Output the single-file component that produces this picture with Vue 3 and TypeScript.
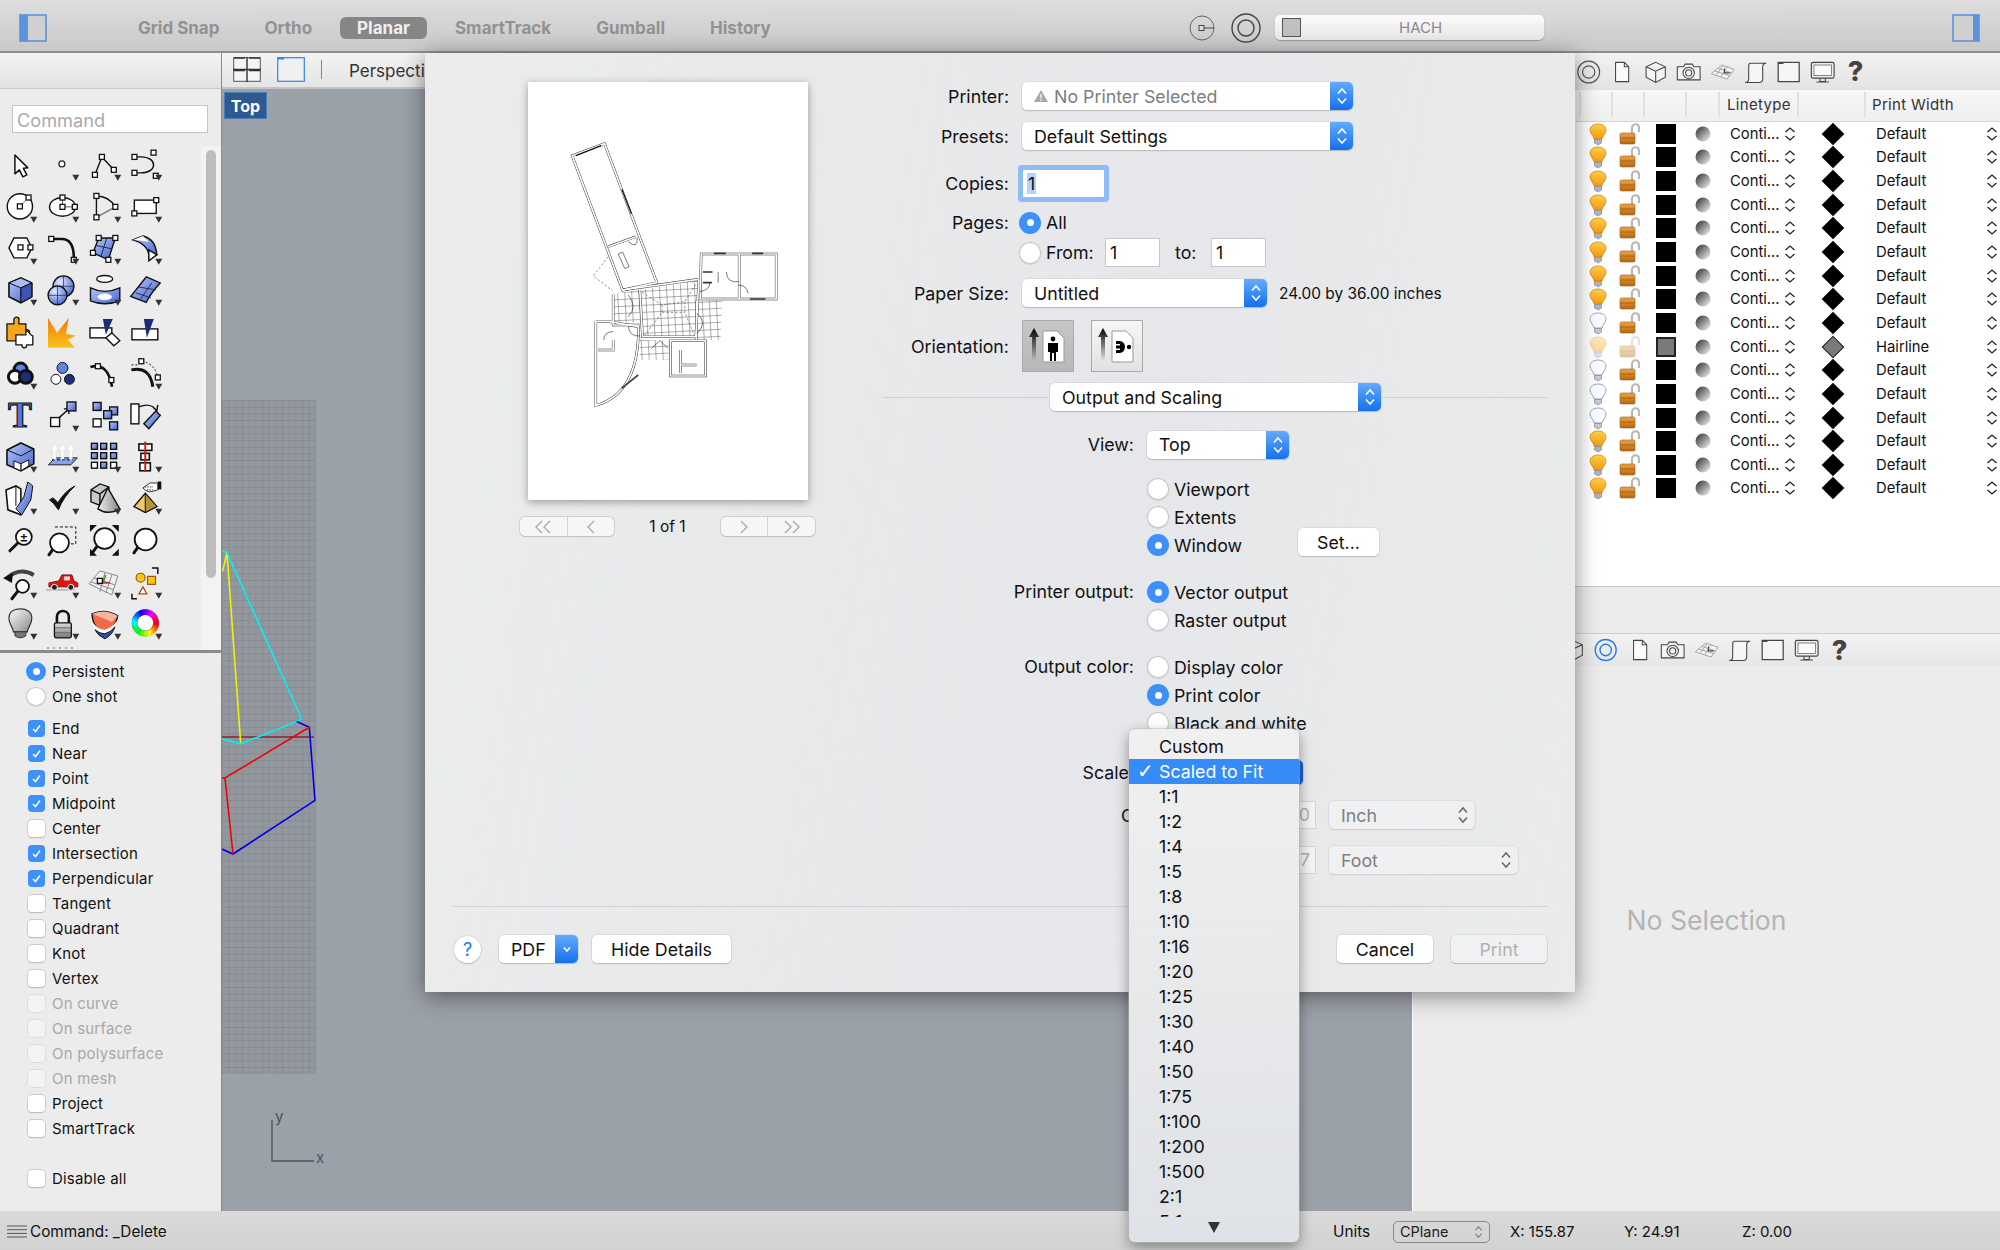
<script setup lang="ts">
const sq = (x: number, y: number, s = 5) =>
  `<rect x="${x - s / 2}" y="${y - s / 2}" width="${s}" height="${s}" fill="#fff" stroke="#111" stroke-width="1.3"/>`;
const bsq = (x: number, y: number, s = 8, f = 'url(#blueFill)') =>
  `<rect x="${x - s / 2}" y="${y - s / 2}" width="${s}" height="${s}" fill="${f}" stroke="#111" stroke-width="1.4"/>`;
const line = 'fill="none" stroke="#111" stroke-width="1.4"';
const thick = 'fill="none" stroke="#111" stroke-width="2.6"';
const lens = (x: number, y: number, r: number, hx: number, hy: number) =>
  `<path d="M${x - r * 0.7} ${y + r * 0.7}L${hx} ${hy}" stroke="#111" stroke-width="3" stroke-linecap="round"/><circle cx="${x}" cy="${y}" r="${r}" fill="#fff" stroke="#111" stroke-width="1.8"/>`;
const upArrow = (x: number) =>
  `<path d="M${x - 1.5} 24V14H${x - 4}L${x} 8 ${x + 4} 14H${x + 1.5}V24Z" fill="#fff" stroke="#ddd" stroke-width=".6"/>`;

function colorWheel() {
  let out = '';
  const n = 30;
  for (let i = 0; i < n; i++) {
    const a = (i / n) * Math.PI * 2;
    const b = ((i + 1.2) / n) * Math.PI * 2;
    const p = (r: number, t: number) => `${(20.4 + r * Math.cos(t)).toFixed(2)} ${(20 + r * Math.sin(t)).toFixed(2)}`;
    out += `<path d="M${p(11, a)}L${p(11, b)}" stroke="hsl(${Math.round((i / n) * 360)},100%,50%)" stroke-width="5.5" fill="none"/>`;
  }
  return `<circle cx="20.4" cy="20" r="13.5" fill="#111"/>${out}<circle cx="20.4" cy="20" r="8" fill="#fff"/>`;
}

const tools: [string, boolean][] = [
  // row 1
  [`<path d="M15 11V30L19.5 26 23 33 27 31 23.5 24.5 28 24Z" fill="#fff" stroke="#111" stroke-width="1.5" stroke-linejoin="round"/>`, false],
  [`<circle cx="20" cy="20" r="3" fill="#fff" stroke="#222" stroke-width="1.2"/>`, true],
  [`<path d="M11 31 18 13 30 26" ${line}/>${sq(18, 13)}${sq(11, 31)}${sq(30, 26)}`, true],
  [`<path d="M9.5 13H16C33 13 33 29 16 29H9.5" ${line}/>${sq(9.5, 13)}${sq(28.7, 8.7)}${sq(9.5, 29)}${sq(31, 32)}`, true],
  // row 2
  [`<circle cx="20" cy="20.5" r="12.7" fill="#fff" ${line}/><path d="M20 20.5 28.7 11.6" stroke="#777"/>${sq(20, 20.5)}${sq(28.7, 11.6)}`, true],
  [`<ellipse cx="20.6" cy="21" rx="13" ry="9.5" fill="#fff" ${line}/><path d="M20.6 21H33M20.6 21V11.6" stroke="#555"/>${sq(20.6, 11.6)}${sq(20.6, 21)}${sq(33, 21)}`, true],
  [`<path d="M12.5 10V31.5" ${line}/><path d="M12.5 31.5 31.5 21" stroke="#777" stroke-width="1.4"/><path d="M12.5 10Q25 10 31.5 21" ${line}/>${sq(12.5, 10)}${sq(12.5, 31.5)}${sq(31.5, 21)}`, true],
  [`<rect x="9.4" y="14.2" width="22" height="13.4" fill="#fff" ${line}/>${sq(31.4, 14.2)}${sq(9.4, 27.6)}`, true],
  // row 3
  [`<path d="M9 20 14 10H27L32 20 27 30H14Z" fill="#fff" ${line}/>${sq(20.6, 19.5)}${sq(30.6, 19.5)}`, true],
  [`<path d="M9 11H20Q32 11 32 30" ${thick}/>${sq(9.3, 11)}${sq(32, 32)}`, true],
  [`<path d="M14.8 10 31.5 10 24.5 32 9 25Z" fill="url(#blueFill)" ${line}/><path d="M12 17.5 28 21M23 10 17 28.5" stroke="#224" stroke-width="1"/>${sq(14.8, 10)}${sq(31.5, 10)}${sq(9, 25)}${sq(24.5, 32)}`, true],
  [`<path d="M8 12 18 8 Q31 11 32 27 L24 31 Q25 17 8 12Z" fill="url(#blueFill)" ${line}/><path d="M8 12 18 8 24 14Q16 12 8 12Z" fill="#fff"/><path d="M24 22 32 27 24 33Z" fill="#fff" ${line}/>`, true],
  // row 4
  [`<path d="M9 14 21 9 32 14V28L21 34 9 28Z" fill="url(#blueFill)" stroke="#111" stroke-width="1.6"/><path d="M9 14 21 19 32 14 21 9Z" fill="#a9bdf4" stroke="#111"/><path d="M21 19V34" stroke="#111"/><path d="M21 19 32 14V28L21 34Z" fill="#3a55b5" stroke="#111"/>`, true],
  [`<circle cx="21.6" cy="17.4" r="10.5" fill="url(#ballFill)" ${line}/><path d="M11 17.4H32M21.6 7V28" stroke="#224" stroke-width=".7"/><circle cx="15.6" cy="26.5" r="9.5" fill="url(#ballFill)" ${line}/><path d="M6 26.5H25M15.6 17V36" stroke="#224" stroke-width=".7"/>`, true],
  [`<ellipse cx="20.8" cy="10" rx="8" ry="3.5" fill="#fff" ${line}/><path d="M6.5 19Q21 26 36 19V32Q21 38 6.5 32Z" fill="url(#blueFill)" ${line}/><ellipse cx="20.8" cy="28" rx="7" ry="3" fill="#fff" stroke="#dfe7ff" stroke-width="1"/>`, true],
  [`<path d="M5.8 27.5 21.4 8 35.4 14Q26 24 21.4 33.5Z" fill="url(#blueFill)" ${line}/><path d="M13 18 31 21 M15 31 27 14M11 24 26 29" stroke="#224" stroke-width=".9"/>`, true],
  // row 5
  [`<path d="M7 13H14V8C16 5 20 6 19 10V13H26V19C31 18 31 24 26 24V30H7Z" fill="#f5a61d" stroke="#111" stroke-width="1.3"/><path d="M16 24H26V20C30 20 30 25 33 25V34H27C27 38 22 38 22 34H16Z" fill="#fff" stroke="#111" stroke-width="1.3"/>`, false],
  [`<path d="M6 7 15 22 27 7 24 23 34 25 26 29 33 37H6Z" fill="url(#orangeFill)"/>`, false],
  [`<rect x="6" y="17" width="22" height="10" fill="#fff" ${line}/><path d="M19 8H29L22 24Z" fill="#1b2c7a"/><path d="M22 27 28 22 36 30 30 35Z" fill="#fff" ${line}/>`, false],
  [`<rect x="7" y="18" width="26" height="11" fill="#fff" ${line}/><path d="M19 8H29L22 27Z" fill="#1b2c7a"/>`, false],
  // row 6
  [`<circle cx="20.7" cy="16.6" r="6.5" fill="#5f83e8" stroke="#111" stroke-width="3"/><circle cx="15" cy="24" r="6.5" fill="#fff" stroke="#111" stroke-width="3"/><circle cx="26" cy="24" r="6.5" fill="#1c2f78" stroke="#111" stroke-width="3"/>`, true],
  [`<circle cx="20.6" cy="15" r="5.5" fill="#5f83e8" stroke="#111"/><circle cx="14" cy="26.5" r="5" fill="#fff" stroke="#111"/><circle cx="27.6" cy="26.5" r="5" fill="#1c2f78" stroke="#111"/>`, false],
  [`<path d="M6.5 14Q24 9 28.2 34" ${thick}/>${sq(14, 13.3)}${sq(27.5, 27.2)}`, false],
  [`<path d="M6.4 17Q25 13 28 34" fill="none" stroke="#111" stroke-width="3"/><path d="M6.5 12H14M17 8Q30 11 33 24" fill="none" stroke="#111" stroke-dasharray="2 2"/>${sq(16.4, 8.3)}${sq(33, 24.6)}`, true],
  // row 7
  [`<text x="20" y="32" text-anchor="middle" font-family="Liberation Serif, serif" font-weight="700" font-size="36" fill="#4f7bea" stroke="#111" stroke-width="1.2">T</text>`, false],
  [`<path d="M17 23 27 14M22 14H27V19" ${line}/>${bsq(13.2, 27.2, 9, '#fff')}${bsq(29.6, 11.5, 9)}`, true],
  [`${bsq(13.2, 11.5)}${bsq(29.8, 16)}${bsq(23.8, 19.8)}${bsq(13.2, 28, 8, '#fff')}${bsq(29.8, 31)}`, false],
  [`<rect x="6" y="9" width="8" height="20" fill="#fff" ${line}/><path d="M19 29 31 16 35.5 20.5 24 34Z" fill="url(#blueFill)" ${line}/><path d="M14 12Q26 7 32 16M28 12 32 16 33 10" ${line}/>`, false],
  // row 8
  [`<path d="M7 14 21 7 34 13V28L21 35 7 29Z" fill="url(#blueFill)" stroke="#111" stroke-width="1.6"/><path d="M7 14 21 20 34 13" fill="none" stroke="#111"/><path d="M21 28 29 24V30L21 35Z" fill="#fff" stroke="#111"/><path d="M14 25 21 28V35L14 32Z" fill="#fff" stroke="#111"/>`, true],
  [`<path d="M13 22H35.5L29 29H6.5Z" fill="#86a2ee" stroke="#222"/>${upArrow(12.6)}${upArrow(20.6)}${upArrow(28.9)}<path d="M10 24H31" stroke="#111" stroke-dasharray="3 2"/>`, true],
  [`${bsq(10.5, 10.4, 6)}${bsq(19.8, 10.4, 6)}${bsq(29.8, 10.4, 6)}${bsq(10.5, 19.8, 6)}${bsq(19.8, 19.8, 6)}${bsq(29.8, 19.8, 6)}${bsq(10.5, 29.4, 6, '#fff')}${bsq(19.8, 29.4, 6)}${bsq(29.8, 29.4, 6, '#fff')}`, true],
  [`<rect x="14" y="8" width="13" height="6.5" fill="#fff" stroke="#111" stroke-width="1.6"/><rect x="16" y="17.5" width="8.5" height="6.5" fill="#fff" stroke="#111" stroke-width="1.6"/><rect x="15" y="27" width="10.5" height="8" fill="#fff" stroke="#111" stroke-width="1.6"/><path d="M20.4 5.6V36" stroke="#d01c1c" stroke-width="2"/>`, true],
  // row 9
  [`<path d="M6 12 16 8 21 11V37L8 32Z" fill="#fff" stroke="#111" stroke-width="1.6"/><path d="M16 8V28" stroke="#111"/><path d="M28 4 33 8 31 22 22 37 16 31 24 19Z" fill="url(#blueFill)" stroke="#111"/>`, true],
  [`<path d="M7.5 22Q11 24 16.5 32 22 18 33.2 8 23 13 16 25 13 21 11 20Z" fill="#111" stroke="#111"/>`, true],
  [`<path d="M7 12 16 6 25 9V19L15 27 7 24Z" fill="#c9c9c9" ${line}/><path d="M7 12 16 16 25 9M16 16V27" ${line}/><path d="M24 10 14 31Q24 38 36 31Z" fill="url(#coneFill)" ${line}/>`, true],
  [`<path d="M20.4 15.3 32 28.7 20.4 34.7 9 28.7Z" fill="#ecc869" stroke="#111" stroke-width="1.4"/><path d="M20.4 15.3V34.7 L32 28.7Z" fill="#b8923a" stroke="#111"/><path d="M18 10 25 5H33V12L25 14Q20 13 18 10Z" fill="#fff" stroke="#333"/><path d="M20 9H28M22 12H28" stroke="#333" stroke-dasharray="1.5 1"/><rect x="33" y="3.5" width="3.5" height="8" fill="#111"/>`, true],
  // row 10
  [`${lens(24, 17, 8, 10, 31)}<text x="24" y="22" text-anchor="middle" font-family="Inter,sans-serif" font-size="13" font-weight="600" fill="#111">±</text>`, false],
  [`<path d="M13 7H34V24H27" fill="none" stroke="#111" stroke-dasharray="3 2"/>${lens(17.6, 23, 9.5, 7, 35)}`, false],
  [`${lens(20.8, 18.6, 10.5, 9, 32)}<path d="M6 5H13L6 12ZM35 5H28L35 12ZM6 36H13L6 29ZM35 36H28L35 29Z" fill="#111"/>`, false],
  [`${lens(20.75, 19.6, 11, 9, 33)}`, false],
  // row 11
  [`${lens(22.7, 24.5, 6.5, 12, 37)}<path d="M7 16Q20 5 34 13" fill="none" stroke="#444" stroke-width="4"/><path d="M3 16 13 11 12 21Z" fill="#111"/>`, true],
  [`<path d="M4 28 33 28" stroke="#bbb" stroke-width="2"/><path d="M7 25V21L17 19 20 13H30L32 19 36 21V25Z" fill="#dc1616" stroke="#8a0c0c"/><rect x="22" y="14.5" width="6" height="4" fill="#f6d8d8"/><circle cx="12.5" cy="25.5" r="3" fill="#222" stroke="#fff"/><circle cx="29" cy="25.5" r="3" fill="#222" stroke="#fff"/>`, true],
  [`<path d="M5 22 16 9 34 14 28 33Z" fill="#f0f0f0" stroke="#888"/><path d="M10 16 31 23M7 20 30 28M21 11 16 30M28 13 22 31" stroke="#888" fill="none"/><path d="M19 21H26" stroke="#d11" stroke-width="1.5"/><path d="M19 21 22 13" stroke="#2a2" stroke-width="1.5"/>${sq(16, 19)}`, true],
  [`<circle cx="15.7" cy="15.8" r="4.5" fill="#f4c90f" stroke="#a5540e" stroke-width="1.2"/><rect x="22.7" y="14.5" width="8" height="8" fill="#f4c90f" stroke="#a5540e" stroke-width="1.2"/><path d="M18 25 22 32H14Z" fill="#fff" stroke="#a5540e" stroke-width="1.3"/><path d="M27 6H33V12M7 32V37H12" fill="none" stroke="#111" stroke-width="1.5"/>`, true],
  // row 12
  [`<path d="M13.5 29C13 24 9 22 9 15 9 8 15 6 20.7 6 27 6 32 9 32 15 32 22 28 24 27.5 29Z" fill="url(#bulbGray)" stroke="#333" stroke-width="1.2"/><path d="M15 29H26V33Q20.5 37 15 33Z" fill="#777" stroke="#333"/>`, true],
  [`<path d="M15 22V14C15 6 27 6 27 14V22" fill="none" stroke="#111" stroke-width="2.6"/><rect x="12.5" y="20" width="17" height="15" rx="1.5" fill="url(#lockGray)" stroke="#111" stroke-width="1.3"/><path d="M13 25H29M13 30H29" stroke="#666"/>`, true],
  [`<path d="M8 11Q21 5 34 13 32 25 21 30Q9 26 8 11Z" fill="#ef6a45" stroke="#111" stroke-width="1.3"/><path d="M8 11Q21 5 34 13L28 19Q16 14 8 11Z" fill="#f6b49e"/><path d="M9 20Q15 27 21 27 29 24 33 18L33 21Q29 30 21 33Q12 29 9 23Z" fill="#fff"/><path d="M11 27Q16 31 21 31 28 29 31 24 29 32 21 36Q14 33 11 27Z" fill="#2e4fb8" stroke="#111"/>`, true],
  [colorWheel(), true],
];

const osnaps = [
  { t: 'End', on: true }, { t: 'Near', on: true }, { t: 'Point', on: true }, { t: 'Midpoint', on: true },
  { t: 'Center' }, { t: 'Intersection', on: true }, { t: 'Perpendicular', on: true }, { t: 'Tangent' },
  { t: 'Quadrant' }, { t: 'Knot' }, { t: 'Vertex' }, { t: 'On curve', off: true }, { t: 'On surface', off: true },
  { t: 'On polysurface', off: true }, { t: 'On mesh', off: true }, { t: 'Project' }, { t: 'SmartTrack' },
];

const layers = Array.from({ length: 16 }, (_, i) => ({
  bulb: [8, 10, 11, 12].includes(i) ? 'bulbOff' : 'bulbOn',
  faded: i === 9,
  width: i === 9 ? 'Hairline' : 'Default',
}));

const panelIcons = ['icoDoc', 'icoCube', 'icoCam', 'icoGrid', 'icoScroll', 'icoWin', 'icoMon'];
const lowerIcons = ['icoDoc', 'icoCam', 'icoGrid', 'icoScroll', 'icoWin', 'icoMon'];
const scales = ['1:1', '1:2', '1:4', '1:5', '1:8', '1:10', '1:16', '1:20', '1:25', '1:30', '1:40', '1:50', '1:75', '1:100', '1:200', '1:500', '2:1', '5:1'];
</script>

<template>
  <div class="app">
    <svg class="defs" width="0" height="0">
      <defs>
        <linearGradient id="blueFill" x1="0" y1="0" x2="1" y2="1"><stop offset="0" stop-color="#b8c9f6" /><stop offset="1" stop-color="#3f62d0" /></linearGradient>
        <radialGradient id="ballFill" cx=".35" cy=".3" r=".8"><stop offset="0" stop-color="#e4ebff" /><stop offset="1" stop-color="#3f62d0" /></radialGradient>
        <linearGradient id="orangeFill" x1="0" y1="0" x2="0" y2="1"><stop offset="0" stop-color="#f07a08" /><stop offset="1" stop-color="#fcc21a" /></linearGradient>
        <linearGradient id="coneFill" x1="0" y1="0" x2="1" y2="0"><stop offset="0" stop-color="#eee" /><stop offset="1" stop-color="#888" /></linearGradient>
        <linearGradient id="bulbGray" x1="0" y1="0" x2="1" y2="1"><stop offset="0" stop-color="#fff" /><stop offset="1" stop-color="#888" /></linearGradient>
        <linearGradient id="lockGray" x1="0" y1="0" x2="0" y2="1"><stop offset="0" stop-color="#ddd" /><stop offset="1" stop-color="#777" /></linearGradient>
        <linearGradient id="bulbY" x1="0" y1="0" x2="0" y2="1"><stop offset="0" stop-color="#ffd24a" /><stop offset="1" stop-color="#f59a12" /></linearGradient>
        <linearGradient id="wood" x1="0" y1="0" x2="0" y2="1"><stop offset="0" stop-color="#eda548" /><stop offset="1" stop-color="#b5660f" /></linearGradient>
        <linearGradient id="sphereG" x1="0" y1="0" x2="1" y2="1"><stop offset="0" stop-color="#2a2a2a" /><stop offset=".42" stop-color="#808080" /><stop offset="1" stop-color="#fafafa" /></linearGradient>
        <linearGradient id="arrowFade" x1="0" y1="0" x2="0" y2="1"><stop offset="0" stop-color="#000" /><stop offset="1" stop-color="#000" stop-opacity="0" /></linearGradient>
        <pattern id="hatch" width="21" height="21" patternUnits="userSpaceOnUse" patternTransform="rotate(-3)"><path d="M21 0H0V21" fill="none" stroke="#444" stroke-width="2.6" /></pattern>
        <pattern id="vpGrid" x="222" y="400" width="6.67" height="6.67" patternUnits="userSpaceOnUse"><path d="M6.67 0H0V6.67" fill="none" stroke="#83888f" stroke-width="1.2" /></pattern>

        <symbol id="chev" viewBox="0 0 12 20"><path d="M2 7.5 6 3 10 7.5M2 12.5 6 17 10 12.5" fill="none" stroke="currentColor" stroke-width="1.5" /></symbol>
        <symbol id="chevW" viewBox="0 0 12 16"><path d="M1.5 6 6 2 10.5 6M1.5 10 6 14 10.5 10" fill="none" stroke="currentColor" stroke-width="1.3" /></symbol>
        <symbol id="bulbOn" viewBox="0 0 24 24"><path d="M8 17C8 14 4 12 4 8 4 4 8 2 12 2 16 2 20 4 20 8 20 12 16 14 16 17Z" fill="url(#bulbY)" stroke="#d8881a" stroke-width=".8" /><path d="M8.5 17.5H15.5V21L12 23 8.5 21Z" fill="#aeb6c4" stroke="#778" stroke-width=".6" /></symbol>
        <symbol id="bulbOff" viewBox="0 0 24 24"><path d="M8 17C8 14 4 12 4 8 4 4 8 2 12 2 16 2 20 4 20 8 20 12 16 14 16 17Z" fill="#f8fbff" stroke="#8d9cb0" stroke-width=".9" /><path d="M8.5 17.5H15.5V21L12 23 8.5 21Z" fill="#c4cad4" stroke="#778" stroke-width=".6" /></symbol>
        <symbol id="lockOpen" viewBox="0 0 24 24"><path d="M15 12V6C15 1 22 1 22 6V10" fill="none" stroke="#b8b8b8" stroke-width="2.2" /><rect x="3" y="11" width="15" height="11" rx="1.5" fill="url(#wood)" stroke="#9a5a12" stroke-width=".6" /><path d="M3 16H18" stroke="#a86010" /></symbol>

        <symbol id="icoTarget" viewBox="0 0 32 32"><circle cx="16" cy="16" r="12.5" fill="none" stroke="#555" stroke-width="1.3" /><circle cx="16" cy="16" r="7" fill="none" stroke="#555" stroke-width="1.3" /></symbol>
        <symbol id="icoTargetBlue" viewBox="0 0 32 32"><circle cx="16" cy="16" r="12" fill="none" stroke="#2d7fe8" stroke-width="1.6" /><circle cx="16" cy="16" r="6.5" fill="none" stroke="#2d7fe8" stroke-width="1.6" /></symbol>
        <symbol id="icoDoc" viewBox="0 0 32 32"><path d="M9 5H19L24 10V27H9Z" fill="#fbfbfb" stroke="#444" stroke-width="1.2" /><path d="M19 5V10H24" fill="none" stroke="#444" stroke-width="1.2" /></symbol>
        <symbol id="icoCube" viewBox="0 0 32 32"><path d="M16 5 27 10V22L16 28 5 22V10ZM5 10 16 15 27 10M16 15V28" fill="#f4f4f4" stroke="#444" stroke-width="1.2" /></symbol>
        <symbol id="icoCam" viewBox="0 0 32 32"><path d="M3 10H10L12 7H20L22 10H29V25H3Z" fill="#f4f4f4" stroke="#444" stroke-width="1.2" /><circle cx="16" cy="17" r="6.5" fill="none" stroke="#444" stroke-width="1.2" /><circle cx="16" cy="17" r="3.5" fill="none" stroke="#444" stroke-width="1.2" /></symbol>
        <symbol id="icoGrid" viewBox="0 0 32 32"><path d="M3 18 15 8 29 13 21 24Z" fill="#f4f4f4" stroke="#999" /><path d="M7 15 24 20M11 12 26 17M14 21 21 10M9 19 16 9" stroke="#999" fill="none" /><path d="M18 12V17H24" stroke="#444" stroke-width="1.3" fill="none" /></symbol>
        <symbol id="icoScroll" viewBox="0 0 32 32"><path d="M10 6H28C25 6 24 8 24 10V24C24 27 22 28 20 28H4C7 28 8 26 8 24V9C8 7 9 6 10 6Z" fill="#f6f6f6" stroke="#444" stroke-width="1.2" /></symbol>
        <symbol id="icoWin" viewBox="0 0 32 32"><rect x="4" y="5" width="24" height="22" fill="#f6f6f6" stroke="#444" stroke-width="1.4" /><path d="M4 6H10" stroke="#444" stroke-width="1.8" /></symbol>
        <symbol id="icoMon" viewBox="0 0 32 32"><rect x="3" y="5" width="26" height="18" rx="2" fill="#eee" stroke="#444" stroke-width="1.3" /><rect x="6" y="8" width="20" height="12" fill="#fafafa" stroke="#777" /><path d="M13 23V27H19V23M9 27.5H23" fill="none" stroke="#444" stroke-width="1.2" /></symbol>
      </defs>
    </svg>

    <header class="topbar">
      <svg class="panel-ico" width="28" height="28" viewBox="0 0 28 28"><rect x="1" y="1" width="26" height="26" fill="#d0d0d0" stroke="#5b93dc" stroke-width="1.6" /><rect x="1" y="1" width="8" height="26" fill="#5b93dc" /></svg>
      <nav class="modes">
        <span>Grid Snap</span><span>Ortho</span><span class="mode-on">Planar</span><span>SmartTrack</span><span>Gumball</span><span>History</span>
      </nav>
      <div class="cluster">
        <svg width="26" height="26" viewBox="0 0 26 26"><ellipse cx="13" cy="13" rx="12" ry="12" fill="none" stroke="#666" /><rect x="10" y="10.5" width="5" height="5" fill="#ddd" stroke="#444" /><path d="M15 13H25" stroke="#444" /></svg>
        <svg class="c2" width="30" height="30" viewBox="0 0 30 30"><circle cx="15" cy="15" r="14" fill="none" stroke="#444" stroke-width="1.4" /><circle cx="15" cy="15" r="8" fill="none" stroke="#444" stroke-width="1.4" /></svg>
        <div class="hach"><i class="hach-swatch"></i><span>HACH</span></div>
      </div>
      <svg class="panel-right" width="28" height="28" viewBox="0 0 28 28"><rect x="1" y="1" width="26" height="26" fill="#d0d0d0" stroke="#5b93dc" stroke-width="1.6" /><rect x="21" y="1" width="6" height="26" fill="#5b93dc" /></svg>
    </header>

    <main class="work">
      <aside class="sidebar">
        <div class="side-head"></div>
        <div class="command">Command</div>
        <div class="tool-area">
          <div class="tool-grid">
            <svg v-for="(t, i) in tools" :key="i" class="tool" viewBox="0 0 42 42">
              <g v-html="t[0]"></g>
              <polygon v-if="t[1]" points="30.5,31 37.5,31 34,37" fill="#333" />
            </svg>
            <i class="grip"></i>
          </div>
          <div class="scroll-track"><div class="scroll-thumb"></div></div>
        </div>
        <div class="osnap">
          <label class="os-row radio-row"><i class="radio on small"></i>Persistent</label>
          <label class="os-row radio-row"><i class="radio small"></i>One shot</label>
          <div class="os-list">
            <label v-for="o in osnaps" :key="o.t" class="os-row" :class="{ dim: o.off }">
              <i class="check" :class="{ on: o.on }">
                <svg v-if="o.on" width="11" height="11" viewBox="0 0 11 11"><path d="M2 6 4.5 8.5 9 2.5" fill="none" stroke="#fff" stroke-width="1.5" /></svg>
              </i>{{ o.t }}
            </label>
          </div>
          <label class="os-row disable"><i class="check"></i>Disable all</label>
        </div>
      </aside>

      <section class="viewport">
        <div class="vp-head">
          <svg width="28" height="25" viewBox="0 0 28 25"><rect x=".7" y=".7" width="26.6" height="23.6" fill="#f5f5f5" stroke="#555" /><path d="M14 0V25M0 12.5H28" stroke="#333" stroke-width="1.4" /><path d="M1 1H12M16 1H27M1 13.5H12M16 13.5H27" stroke="#333" stroke-width="1.4" /></svg>
          <svg class="vp-single" width="28" height="25" viewBox="0 0 28 25"><rect x=".7" y=".7" width="26.6" height="23.6" fill="#f0f0f0" stroke="#2f86ee" stroke-width="1.2" /><path d="M1 1.5H7" stroke="#2f86ee" stroke-width="2" /></svg>
          <i class="vp-sep"></i>
          <span class="vp-persp">Perspective</span>
        </div>
        <div class="vp-body">
          <span class="vp-tab">Top</span>
          <svg class="vp-draw" viewBox="222 53 1190 1158">
            <rect x="222" y="400" width="94" height="674" fill="#93989f" />
            <rect x="222" y="400" width="94" height="674" fill="url(#vpGrid)" />
            <path d="M222 737H314" stroke="#8d3f45" stroke-width="2" />
            <g fill="none" stroke-width="1.6">
              <path d="M222.5 571.6 227 552.7 240.7 743.8" stroke="#f5f000" />
              <path d="M222 551 227 552.7 301.7 719 296.7 721.6 240.7 743.8 222 738.8" stroke="#00f0f0" />
              <path d="M296.7 721.6 309.3 727.3 315 800.4 233 854 222 849" stroke="#0000e6" />
              <path d="M309.3 727.3 225 778 222 778M225 778 233 854" stroke="#f00000" />
            </g>
            <path d="M272 1120V1161H314" fill="none" stroke="#4d535b" stroke-width="1.3" />
            <text x="275" y="1122" class="axis">y</text>
            <text x="316" y="1163" class="axis">x</text>
          </svg>
        </div>
      </section>

      <section class="rightpanel">
        <div class="rp-tools upper">
          <svg class="rp-ico"><use href="#icoTarget" /></svg>
          <svg v-for="p in panelIcons" :key="p" class="rp-ico"><use :href="'#' + p" /></svg>
          <b class="rp-q">?</b>
        </div>
        <div class="layer-table">
          <div class="layer-head">
            <i></i><i></i><i></i><i></i><i></i>
            <span class="col-line">Linetype</span><i class="col-dia"></i><span class="col-print">Print Width</span>
          </div>
          <div v-for="(l, i) in layers" :key="i" class="layer-row" :class="{ faded: l.faded }">
            <svg class="lr-bulb" width="24" height="24"><use :href="'#' + l.bulb" /></svg>
            <svg class="lr-lock" width="24" height="24"><use href="#lockOpen" /></svg>
            <i class="lr-swatch"></i>
            <i class="lr-sphere"><svg width="16" height="16" viewBox="0 0 16 16"><circle cx="8" cy="8" r="7.5" fill="url(#sphereG)" /></svg></i>
            <span class="lr-line">Conti...</span>
            <svg class="lr-step" width="12" height="16"><use href="#chevW" /></svg>
            <i class="lr-dia"></i>
            <span class="lr-width">{{ l.width }}</span>
            <svg class="lr-step2" width="12" height="16"><use href="#chevW" /></svg>
          </div>
        </div>
        <div class="rp-gap"></div>
        <div class="rp-tools lower">
          <svg class="rp-ico"><use href="#icoCube" /></svg>
          <svg class="rp-ico"><use href="#icoTargetBlue" /></svg>
          <svg v-for="p in lowerIcons" :key="p" class="rp-ico"><use :href="'#' + p" /></svg>
          <b class="rp-q">?</b>
        </div>
        <div class="no-sel">No Selection</div>
      </section>
    </main>

    <footer class="status">
      <svg width="20" height="14" viewBox="0 0 20 14"><path d="M0 1H20M0 4.7H20M0 8.4H20M0 12H20" stroke="#555" stroke-width="1" /></svg>
      <span class="st-cmd">Command: _Delete</span>
      <span class="st-units">Units</span>
      <div class="st-sel">CPlane<svg width="9" height="16"><use href="#chev" /></svg></div>
      <span class="st-x">X: 155.87</span>
      <span class="st-y">Y: 24.91</span>
      <span class="st-z">Z: 0.00</span>
    </footer>

    <div class="dialog">
      <div class="dlg-top">
        <div class="preview">
          <div class="page">
            <svg viewBox="85 66 839 1254" width="280" height="418">
              <g fill="url(#hatch)" stroke="none">
                <path d="M335 703 415 690 420 790 340 785Z" />
                <path d="M415 690 597 660 588 830 425 830Z" />
                <path d="M590 722H667L662 840H590Z" />
                <path d="M420 840H510L508 900H420Z" />
              </g>
              <g fill="none" stroke="#333" stroke-width="1.6" stroke-dasharray="7 6">
                <path d="M325 590 280 648 338 692" />
                <path d="M415 690 487 735 555 725 590 670M487 735V757L435 825M487 757H555M555 725V757L585 830" />
              </g>
              <g class="wall">
                <path d="M217 287 314 251 471 668 368 690ZM325 560 408 530" />
                <path d="M604 582H829V717H601ZM718 582V717" />
                <path d="M512 842H617V948H512ZM542 870V938M542 915H590" />
                <path d="M288 783V1036Q418 1000 416 800L330 785H288ZM295 870H340V840" />
                <path d="M368 690 595 658M420 690 428 830H588L597 660M420 795H340V704M590 722V840" />
              </g>
              <g class="wall-in">
                <path d="M217 287 314 251 471 668 368 690ZM325 560 408 530" />
                <path d="M604 582H829V717H601ZM718 582V717" />
                <path d="M512 842H617V948H512ZM542 870V938M542 915H590" />
                <path d="M288 783V1036Q418 1000 416 800L330 785H288ZM295 870H340V840" />
                <path d="M368 690 595 658M420 690 428 830H588L597 660M420 795H340V704M590 722V840" />
              </g>
              <path d="M228 287 304 257M366 388 395 462" stroke="#111" stroke-width="3.5" fill="none" />
              <path d="M609 636H638M609 668H636M642 580H678M757 580H790M750 717H797" stroke="#333" stroke-width="5" fill="none" />
              <g fill="none" stroke="#222" stroke-width="1.8">
                <path d="M355 582 368 576 388 620 375 626Z" />
                <path d="M385 545Q415 570 412 532" />
                <path d="M680 636Q680 670 718 665M655 636V668M745 700Q740 675 715 675" />
                <path d="M385 705Q415 740 385 770M592 760Q625 790 592 820M455 865 480 842 505 865M312 840Q312 815 340 815M385 800Q390 830 420 828M600 695Q630 690 630 668" />
                <path d="M415 945 365 985" stroke-width="5" stroke="#444" />
              </g>
            </svg>
          </div>
          <div class="pager">
            <div class="seg">
              <span><svg width="18" height="14" viewBox="0 0 18 14"><path d="M8 1 2 7 8 13M16 1 10 7 16 13" fill="none" stroke="#aaa" stroke-width="1.4" /></svg></span>
              <span><svg width="10" height="14" viewBox="0 0 10 14"><path d="M8 1 2 7 8 13" fill="none" stroke="#aaa" stroke-width="1.4" /></svg></span>
            </div>
            <span class="page-no">1 of 1</span>
            <div class="seg">
              <span><svg width="10" height="14" viewBox="0 0 10 14"><path d="M2 1 8 7 2 13" fill="none" stroke="#aaa" stroke-width="1.4" /></svg></span>
              <span><svg width="18" height="14" viewBox="0 0 18 14"><path d="M2 1 8 7 2 13M10 1 16 7 10 13" fill="none" stroke="#aaa" stroke-width="1.4" /></svg></span>
            </div>
          </div>
        </div>

        <div class="form">
          <div class="row">
            <span class="lab-a">Printer:</span>
            <div class="sel w331"><span class="sel-text gray"><svg class="warn" width="16" height="14" viewBox="0 0 16 14"><path d="M8 1 15 13H1Z" fill="#a8a8a8" /><path d="M8 5V9.5M8 10.5V12" stroke="#fff" stroke-width="1.2" /></svg>No Printer Selected</span><span class="sel-arrow"><svg width="12" height="20"><use href="#chev" /></svg></span></div>
          </div>
          <div class="row mt12">
            <span class="lab-a">Presets:</span>
            <div class="sel w331"><span class="sel-text">Default Settings</span><span class="sel-arrow"><svg width="12" height="20"><use href="#chev" /></svg></span></div>
          </div>
          <div class="row mt20 h27">
            <span class="lab-a">Copies:</span>
            <div class="copies"><span class="hl">1</span></div>
          </div>
          <div class="row mt15 h21">
            <span class="lab-a">Pages:</span>
            <i class="radio on shift"></i><span class="rad-lab">All</span>
          </div>
          <div class="row mt5 h29">
            <span class="lab-a"></span>
            <i class="radio shift"></i><span class="rad-lab from">From:</span>
            <span class="field f-from">1</span><span class="to">to:</span><span class="field">1</span>
          </div>
          <div class="row mt12">
            <span class="lab-a">Paper Size:</span>
            <div class="sel w245"><span class="sel-text">Untitled</span><span class="sel-arrow"><svg width="12" height="20"><use href="#chev" /></svg></span></div>
            <span class="paper-size">24.00 by 36.00 inches</span>
          </div>
          <div class="row mt13 h52">
            <span class="lab-a">Orientation:</span>
            <div class="orient pressed">
              <svg width="50" height="50" viewBox="0 0 50 50"><path d="M11 7 6 16H9V40H13V16H16Z" fill="url(#arrowFade)" /><path d="M20 10H34L41 17V41H20Z" fill="#fff" stroke="#999" /><circle cx="30" cy="18" r="2.4" /><path d="M25 22H35V31H33V40H31V32H29V40H27V31H25Z" /></svg>
            </div>
            <div class="orient">
              <svg width="50" height="50" viewBox="0 0 50 50"><path d="M11 7 6 16H9V40H13V16H16Z" fill="url(#arrowFade)" /><path d="M20 10H34L41 17V41H20Z" fill="#fff" stroke="#999" /><circle cx="37" cy="26" r="2.2" /><path d="M24 20H28Q33 21 33 26 33 31 28 32H24V29H28V27.5H24V24.5H28V23H24Z" /></svg>
            </div>
          </div>
          <div class="row mt11 section">
            <i class="rule left"></i>
            <div class="sel w331"><span class="sel-text">Output and Scaling</span><span class="sel-arrow"><svg width="12" height="20"><use href="#chev" /></svg></span></div>
            <i class="rule"></i>
          </div>
          <div class="row mt20 h27">
            <span class="lab-b">View:</span>
            <div class="sel w142 h27"><span class="sel-text">Top</span><span class="sel-arrow"><svg width="12" height="20"><use href="#chev" /></svg></span></div>
          </div>
          <div class="group mt17">
            <span class="lab-b"></span>
            <div class="stack">
              <div class="rad-row"><i class="radio"></i><span class="rad-lab">Viewport</span></div>
              <div class="rad-row"><i class="radio"></i><span class="rad-lab">Extents</span></div>
              <div class="rad-row"><i class="radio on"></i><span class="rad-lab wide">Window</span><button class="btn set">Set...</button></div>
            </div>
          </div>
          <div class="group mt19">
            <span class="lab-b">Printer output:</span>
            <div class="stack">
              <div class="rad-row"><i class="radio on"></i><span class="rad-lab">Vector output</span></div>
              <div class="rad-row"><i class="radio"></i><span class="rad-lab">Raster output</span></div>
            </div>
          </div>
          <div class="group mt19">
            <span class="lab-b">Output color:</span>
            <div class="stack">
              <div class="rad-row"><i class="radio"></i><span class="rad-lab">Display color</span></div>
              <div class="rad-row"><i class="radio on"></i><span class="rad-lab">Print color</span></div>
              <div class="rad-row"><i class="radio"></i><span class="rad-lab">Black and white</span></div>
            </div>
          </div>
          <div class="row mt21">
            <span class="lab-b">Scale:</span>
            <div class="sel scale-sel"><span class="sel-text"></span><span class="sel-arrow dark"></span></div>
          </div>
          <div class="row mt15">
            <span class="lab-b">C</span>
            <span class="field dis">10</span>
            <div class="sel dis w146"><span class="sel-text">Inch</span><svg class="dis-arrow" width="12" height="20"><use href="#chev" /></svg></div>
          </div>
          <div class="row mt17">
            <span class="lab-b"></span>
            <span class="field dis">57</span>
            <div class="sel dis w189"><span class="sel-text">Foot</span><svg class="dis-arrow" width="12" height="20"><use href="#chev" /></svg></div>
          </div>
        </div>
      </div>
      <i class="dlg-rule"></i>
      <div class="dlg-foot">
        <span class="help">?</span>
        <div class="sel pdf"><span class="sel-text">PDF</span><span class="sel-arrow"><svg width="10" height="10" viewBox="0 0 10 10"><path d="M2 3.5 5 7 8 3.5" fill="none" stroke="#fff" stroke-width="1.5" /></svg></span></div>
        <button class="btn hide">Hide Details</button>
        <button class="btn cancel">Cancel</button>
        <button class="btn print">Print</button>
      </div>

      <div class="menu">
        <div class="menu-list">
          <div class="menu-row">Custom</div>
          <div class="menu-row active"><span class="tick">✓</span>Scaled to Fit</div>
          <div v-for="s in scales" :key="s" class="menu-row">{{ s }}</div>
        </div>
        <svg class="menu-more" width="14" height="11" viewBox="0 0 14 11"><path d="M1 0H13L7 11Z" fill="#333" /></svg>
      </div>
    </div>
  </div>
</template>

<style scoped>
.app { width: 2000px; height: 1250px; position: relative; overflow: hidden; display: flex; flex-direction: column; font-family: Inter, "Liberation Sans", sans-serif; color: #111; background: #ececec; }
.defs { position: absolute; }
i { display: block; font-style: normal; }

.topbar { height: 53px; box-sizing: border-box; flex: none; display: flex; align-items: center; padding-top: 4px; background: linear-gradient(#dedede, #c9c9c9); border-bottom: 2px solid #8f8f8f; }
.panel-ico { margin-left: 19px; flex: none; }
.modes { display: flex; gap: 45px; margin-left: 91px; width: 1051px; flex: none; font-size: 17px; font-weight: 700; color: #929292; align-items: center; }
.mode-on { background: #868686; color: #f0f0f0; border-radius: 6px; padding: 1px 17px; margin: 0 -17px 0 -17px; }
.cluster { display: flex; align-items: center; }
.c2 { margin-left: 16px; }
.hach { width: 269px; height: 25px; margin-left: 14px; box-sizing: border-box; background: linear-gradient(#fbfbfb, #e8e8e8); border-radius: 5px; box-shadow: 0 1px 1px #999; display: flex; align-items: center; font-size: 15px; color: #8a8a8a; position: relative; }
.hach span { margin-left: 98px; }
.hach-swatch { width: 19px; height: 19px; margin-left: 7px; background: #c0c0c0; border: 1px solid #555; box-sizing: border-box; }
.panel-right { margin-left: auto; margin-right: 20px; }

.work { flex: 1; display: flex; min-height: 0; }

.sidebar { width: 222px; flex: none; box-sizing: border-box; border-right: 1px solid #8a8a8a; display: flex; flex-direction: column; background: #ececec; }
.side-head { height: 36px; box-sizing: border-box; background: linear-gradient(#f3f3f3, #e2e2e2); border-bottom: 1px solid #c8c8c8; flex: none; }
.command { margin: 16px 13px 0 12px; height: 28px; box-sizing: border-box; background: #fff; border: 1px solid #c4c4c4; font-size: 18.2px; color: #aaa; line-height: 29px; padding-left: 4px; flex: none; }
.tool-area { display: flex; margin-top: 11px; height: 506px; flex: none; }
.tool-grid { width: 201px; display: grid; grid-template-columns: repeat(4, 41.75px); grid-auto-rows: 41.75px; align-content: start; position: relative; }
.tool { width: 41.75px; height: 41.75px; display: block; }
.grip { position: absolute; left: 47px; bottom: 1px; width: 30px; height: 2px; background: repeating-linear-gradient(90deg, #aaa 0 2px, transparent 2px 6px); }
.scroll-track { width: 20px; margin-top: 2px; background: #f3f3f3; padding: 4px 5px 0; box-sizing: border-box; }
.scroll-thumb { width: 10px; height: 428px; background: #bdbdbd; border-radius: 5px; }
.osnap { flex: 1; border-top: 3px solid #8a8a8a; padding-top: 6px; font-size: 15px; letter-spacing: .2px; }
.os-row { display: flex; align-items: center; height: 25px; padding-left: 28px; }
.os-row.radio-row { padding-left: 26px; }
.os-list { margin-top: 7px; }
.os-row.dim { color: #a8a8a8; }
.os-row.disable { margin-top: 25px; }
.check { width: 17px; height: 17px; flex: none; margin-right: 7px; box-sizing: border-box; background: #fff; border-radius: 4px; box-shadow: 0 0 0 .7px #c2c2c2, 0 .5px 1px #aaa; display: flex; align-items: center; justify-content: center; }
.check.on { background: #3d91f7; box-shadow: none; }
.dim .check { background: #f3f3f3; box-shadow: 0 0 0 .7px #d8d8d8; }

.radio { width: 22px; height: 22px; flex: none; box-sizing: border-box; border-radius: 50%; background: #fff; box-shadow: inset 0 0 0 1px #c6c6c6, 0 .5px 1px #bbb; display: flex; align-items: center; justify-content: center; }
.radio.on { background: #3c90f8; box-shadow: none; }
.radio.on::after { content: ""; width: 7px; height: 7px; border-radius: 50%; background: #fff; }
.radio.small { width: 20px; height: 19px; margin-right: 6px; }
.radio.shift { margin-left: -3px; }

.viewport { width: 1190px; flex: none; display: flex; flex-direction: column; }
.vp-head { height: 36px; box-sizing: border-box; flex: none; background: linear-gradient(#f3f3f3, #e4e4e4); border-bottom: 2px solid #c4c4c4; display: flex; align-items: center; padding: 0 0 1px 11px; }
.vp-single { margin-left: 16px; }
.vp-sep { width: 1px; height: 19px; background: #888; margin-left: 16px; }
.vp-persp { font-size: 17px; color: #333; margin-left: 27px; padding-top: 2px; }
.vp-body { flex: 1; position: relative; background: #9ba1a8; }
.vp-tab { position: absolute; left: 2px; top: 3px; width: 43px; height: 27px; box-sizing: border-box; background: #2c5b92; border: 1px solid #4e7db1; color: #fff; font-weight: 700; font-size: 16px; text-align: center; line-height: 26px; z-index: 1; }
.vp-draw { position: absolute; left: 0; top: -36px; width: 1190px; height: 1158px; }
.axis { font: 15px Inter, sans-serif; fill: #4d535b; }

.rightpanel { flex: 1; display: flex; flex-direction: column; background: #ececec; border-left: 1px solid #fff; }
.rp-tools { display: flex; align-items: center; flex: none; }
.rp-tools.upper { height: 37px; padding-left: 159px; background: linear-gradient(#f2f2f2, #e3e3e3); }
.rp-tools.lower { height: 32px; padding-left: 143px; background: linear-gradient(#f2f2f2, #e6e6e6); border-top: 1px solid #d0d0d0; }
.rp-ico { width: 33.4px; height: 28px; flex: none; }
.rp-q { font-size: 27px; font-weight: 800; color: #444; width: 33px; text-align: center; line-height: 1; }
.layer-table { height: 497px; flex: none; box-sizing: border-box; background: #fff; padding-left: 163px; border-bottom: 1px solid #c8c8c8; }
.layer-head { height: 32px; display: flex; box-sizing: border-box; padding-bottom: 3px; background: linear-gradient(#f7f7f7, #efefef); border-bottom: 1px solid #d4d4d4; font-size: 15px; color: #333; letter-spacing: .3px; align-items: center; }
.layer-head i { height: 25px; border-right: 2px solid #e0e0e0; flex: none; box-sizing: border-box; }
.layer-head i:nth-child(1) { width: 5px; }
.layer-head i:nth-child(2) { width: 32px; }
.layer-head i:nth-child(3) { width: 32px; }
.layer-head i:nth-child(4) { width: 42px; }
.layer-head i:nth-child(5) { width: 33px; }
.col-line { width: 79px; height: 25px; line-height: 25px; padding-left: 7px; border-right: 2px solid #e0e0e0; flex: none; box-sizing: border-box; }
.layer-head i.col-dia { width: 67px; }
.col-print { padding-left: 6px; }
.layer-row { height: 23.65px; display: flex; align-items: center; font-size: 14.8px; position: relative; }
.lr-bulb { margin-left: 10px; flex: none; }
.lr-lock { margin-left: 7px; flex: none; }
.lr-swatch { width: 20px; height: 20px; background: #000; margin-left: 15px; flex: none; box-sizing: border-box; }
.lr-sphere { margin-left: 19px; width: 16px; height: 16px; flex: none; }
.lr-line { margin-left: 19px; width: 54px; flex: none; }
.lr-step { flex: none; color: #222; }
.lr-dia { width: 16px; height: 16px; background: #000; transform: rotate(45deg); margin-left: 29px; flex: none; box-sizing: border-box; }
.lr-width { margin-left: 35px; width: 110px; flex: none; }
.lr-step2 { flex: none; color: #222; }
.faded .lr-bulb, .faded .lr-lock { opacity: .4; }
.faded .lr-swatch { background: #7a7a7a; border: 2px solid #222; }
.faded .lr-dia { background: #7a7a7a; border: 1px solid #222; }
.rp-gap { height: 46px; flex: none; }
.no-sel { flex: 1; display: flex; align-items: flex-start; justify-content: center; padding: 238px 0 0 0; font-size: 26.6px; color: #b4b4b4; }

.status { height: 39px; flex: none; background: linear-gradient(#dadada, #d2d2d2); display: flex; align-items: center; font-size: 15.3px; position: relative; padding: 2px 0 0 7px; box-sizing: border-box; }
.st-cmd { margin-left: 3px; width: 1303px; }
.st-units { width: 60px; }
.st-sel { width: 97px; height: 22px; box-sizing: border-box; border: 1px solid #888; border-radius: 5px; display: flex; align-items: center; justify-content: space-between; padding: 0 6px; font-size: 14.5px; color: #222; }
.st-sel svg { color: #777; }
.st-x { margin-left: 20px; width: 114px; font-size: 15px; }
.st-y { width: 118px; font-size: 15px; }
.st-z { font-size: 15px; }

.dialog { position: absolute; left: 425px; top: 53px; width: 1150px; height: 939px; box-sizing: border-box; background: linear-gradient(100deg, #ececec, #e5e7ea 60%, #ebebeb); box-shadow: 0 4px 22px rgba(0, 0, 0, .45); z-index: 10; font-size: 17.8px; }
.dlg-top { display: flex; height: 853px; }
.preview { width: 458px; flex: none; padding: 29px 0 0 103px; box-sizing: border-box; }
.page { width: 280px; height: 418px; background: #fff; box-shadow: 0 2px 8px rgba(0, 0, 0, .35); }
.page svg { display: block; }
.wall path { fill: none; stroke: #222; stroke-width: 7.5; stroke-linejoin: miter; }
.wall-in path { fill: none; stroke: #fff; stroke-width: 5; stroke-linejoin: miter; }
.pager { display: flex; align-items: center; justify-content: space-between; width: 295px; margin: 17px 0 0 -8px; }
.seg { display: flex; width: 94px; height: 19px; background: #f6f6f6; border-radius: 5px; box-shadow: 0 0 0 .7px #c6c6c6, 0 1px 1px #bbb; }
.seg span { flex: 1; display: flex; align-items: center; justify-content: center; }
.seg span + span { border-left: 1px solid #d4d4d4; }
.page-no { font-size: 15.5px; }

.form { width: 664px; padding-top: 29px; }
.row { display: flex; align-items: center; height: 28px; }
.group { display: flex; align-items: flex-start; }
.stack { display: flex; flex-direction: column; }
.rad-row { display: flex; align-items: center; height: 28px; }
.group .lab-b { line-height: 28px; }
.mt5 { margin-top: 5px; } .mt11 { margin-top: 11px; } .mt12 { margin-top: 12px; } .mt13 { margin-top: 13px; }
.mt15 { margin-top: 15px; } .mt17 { margin-top: 17px; } .mt19 { margin-top: 19px; } .mt20 { margin-top: 20px; } .mt21 { margin-top: 21px; }
.h21 { height: 21px; } .h27 { height: 27px; } .h29 { height: 29px; } .h52 { height: 52px; }
.lab-a { width: 126px; margin-right: 13px; text-align: right; flex: none; }
.lab-b { width: 251px; margin-right: 13px; text-align: right; flex: none; }

.sel { display: flex; align-items: center; height: 28px; box-sizing: border-box; background: #fff; border-radius: 5px; box-shadow: 0 0 0 .6px #cdcdcd, 0 1px 1px #a8a8a8; flex: none; }
.sel-text { flex: 1; padding-left: 12px; display: flex; align-items: center; white-space: nowrap; }
.sel-text.gray { color: #7d7d7d; padding-left: 11px; }
.warn { margin-right: 5px; }
.sel-arrow { width: 23px; height: 100%; flex: none; display: flex; align-items: center; justify-content: center; border-radius: 0 5px 5px 0; background: linear-gradient(#63abfc, #1470ee); color: #fff; }
.sel-arrow.dark { background: #1c62d8; }
.w331 { width: 331px; } .w245 { width: 245px; } .w142 { width: 142px; } .w146 { width: 146px; } .w189 { width: 189px; }
.copies { width: 81px; height: 27px; box-sizing: border-box; background: #fff; box-shadow: 0 0 0 5px #90bcf3; border-radius: 1px; padding: 3px 0 0 4px; margin-left: 1px; line-height: 21px; }
.hl { background: #b3d4fd; padding: 0 1px; display: inline-block; }
.rad-lab { margin-left: 5px; }
.rad-lab.from { width: 54px; }
.rad-lab.wide { width: 124px; }
.field { height: 29px; width: 55px; box-sizing: border-box; background: #fff; box-shadow: inset 0 0 0 1px #c8c8c8; padding: 3px 0 0 5px; line-height: 24px; flex: none; }
.f-from { margin-left: 5px; }
.to { width: 51px; text-align: left; padding-left: 15px; box-sizing: border-box; }
.paper-size { margin-left: 12px; font-size: 15.4px; white-space: nowrap; }
.orient { width: 52px; height: 52px; box-sizing: border-box; border: 1px solid #aaa; background: linear-gradient(#f6f6f6, #e2e2e2); display: flex; align-items: center; justify-content: center; margin-right: 17px; }
.orient.pressed { background: linear-gradient(#c6c6c6, #b8b8b8); }
.section .rule { flex: 1; height: 1px; background: #cfd1d3; }
.section .rule.left { flex: none; width: 165px; margin-right: 2px; }
.section .rule:last-child { margin-left: 1px; }
.btn { font: inherit; color: inherit; border: 0; background: #fff; height: 28px; border-radius: 5px; box-shadow: 0 0 0 .6px #cdcdcd, 0 1px 1px #a8a8a8; padding: 0; flex: none; }
.set { width: 81px; margin-top: -6px; }
.scale-sel { width: 156px; height: 25px; }
.field.dis { width: 76px; height: 28px; margin-left: 93px; text-align: right; padding: 2px 6px 0 0; color: #b0b0b0; background: #f2f3f4; box-shadow: inset 0 0 0 1px #d6d6d6; }
.sel.dis { margin-left: 13px; background: #eff0f1; color: #7f7f7f; box-shadow: 0 0 0 .6px #d4d4d4, 0 1px 1px #c8c8c8; }
.dis-arrow { color: #666; margin-right: 6px; }

.dlg-rule { height: 1px; background: #d0d2d4; margin: 0 27px 0 28px; }
.dlg-foot { display: flex; align-items: center; padding: 28px 28px 0 29px; }
.help { width: 27px; height: 27px; border-radius: 50%; background: #fff; color: #1479f0; box-shadow: 0 0 0 .6px #cdcdcd, 0 1px 1px #a8a8a8; text-align: center; line-height: 27px; font-size: 18px; flex: none; }
.pdf { width: 79px; margin-left: 18px; }
.hide { width: 139px; margin-left: 14px; }
.cancel { width: 96px; margin-left: auto; }
.print { width: 96px; margin-left: 18px; color: #b0b0b0; background: #f0f1f2; }

.menu { position: absolute; left: 704px; top: 676px; width: 170px; height: 513px; background: linear-gradient(#f0f0f0, #dfe2e6); border-radius: 6px; box-shadow: 0 0 0 .5px #bbb, 0 5px 14px rgba(0, 0, 0, .4); z-index: 2; }
.menu-list { padding-top: 5px; height: 483px; overflow: hidden; }
.menu-row { height: 25px; line-height: 25px; padding-left: 30px; position: relative; white-space: nowrap; }
.menu-row.active { background: #358bf8; color: #fff; }
.tick { position: absolute; left: 8px; top: 0; font-family: "DejaVu Sans", sans-serif; font-size: 20px; font-weight: 700; }
.menu-more { position: absolute; left: 78px; bottom: 9px; }
</style>

<style>
html, body { margin: 0; padding: 0; }
</style>
